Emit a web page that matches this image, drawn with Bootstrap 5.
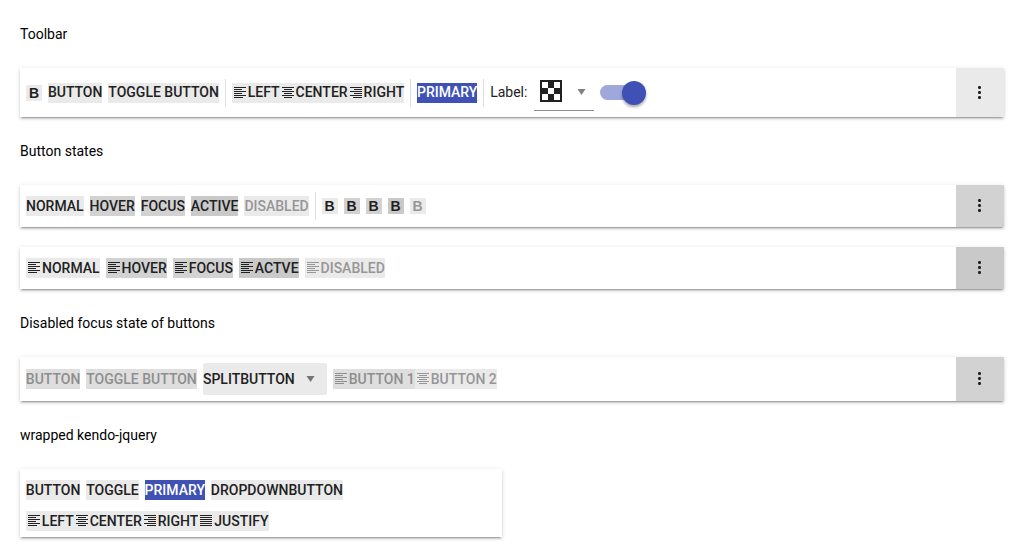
<!DOCTYPE html>
<html lang="en">
<head>
<meta charset="utf-8">
<title>Toolbar</title>
<meta name="viewport" content="width=device-width, initial-scale=1">
<link href="https://cdn.jsdelivr.net/npm/bootstrap@5.3.0/dist/css/bootstrap.min.css" rel="stylesheet">
<style>
body { font-family: Roboto, "Liberation Sans", sans-serif; font-size: 14px; line-height: 20px; color: #000; background: #fff; }
.page-body { padding: 24px 20px 20px; }
.caption-line { margin: 0; height: 20px; }
.toolbar { background: #fff; color: #212121; gap: 5.98px; padding-left: 6px; box-shadow: 0 3px 1px -2px rgba(0,0,0,.2), 0 2px 2px 0 rgba(0,0,0,.14), 0 1px 5px 0 rgba(0,0,0,.12); }
.tool { --bs-btn-padding-x: 0; --bs-btn-padding-y: 0; --bs-btn-font-size: 14px; --bs-btn-line-height: 20px; --bs-btn-font-weight: 500; --bs-btn-border-width: 0; --bs-btn-border-radius: 0; --bs-btn-color: #212121; --bs-btn-bg: #eaeaea; --bs-btn-disabled-opacity: 1; --bs-btn-disabled-bg: var(--bs-btn-bg); --bs-btn-disabled-color: #969696; height: 20px; white-space: nowrap; display: inline-flex; align-items: flex-start; flex: none; transition: none; }
.tool.tone-hover { --bs-btn-bg: #d2d2d2; }
.tool.tone-active { --bs-btn-bg: #c9c9c9; }
.tool.tone-dim { --bs-btn-bg: #dedede; --bs-btn-disabled-color: #8e8e8e; }
.tool.tone-primary { --bs-btn-bg: #3f51b5; --bs-btn-color: #fff; }
.tall-bar { gap: 5.9px; }
.snug-bar { column-gap: 5.83px; padding-left: 5.85px; }
.tall-bar .tool { --bs-btn-line-height: 19px; }
.tall-bar .tool-label { padding-bottom: 1px; }
.toolbar .tool.glyph-b { width: 16px; height: 16px; line-height: 16px; justify-content: center; font-family: "Liberation Sans", sans-serif; font-weight: 700; }
.tool svg { width: 16px; height: 16px; flex: none; margin-top: 2px; }
.divider { width: 1px; height: 28px; background: #dedede; flex: none; }
.overflow { width: 48px; border: 0; border-radius: 0; padding: 0; background: #d2d2d2; }
.color-tool { width: 60px; height: 36px; border-bottom: 1px solid #909090; margin-left: .9px; }
.color-tool .checker { margin: 0 0 2px 6px; }
.color-tool .arrow { margin-left: 15px; }
.switch-track { width: 40px; height: 15px; border-radius: 8px; background: #9fa8da; }
.switch-thumb { width: 24px; height: 24px; margin-right: -6px; border-radius: 50%; background: #3f51b5; box-shadow: 0 2px 3px rgba(0,0,0,.35); flex: none; }
.split-tool { height: 32px; width: 124px; background: #eaeaea; border-radius: 2px; font-weight: 500; margin-left: .3px; }
</style>
<script src="https://cdn.jsdelivr.net/npm/bootstrap@5.3.0/dist/js/bootstrap.bundle.min.js"></script>
</head>
<body>
<svg width="0" height="0" class="d-none">
  <symbol id="al" viewBox="0 0 16 16"><path d="M2 2.5h12M2 4.5h8M2 6.5h12M2 8.5h8M2 10.5h12M2 12.5h9" stroke="currentColor"/></symbol>
  <symbol id="ac" viewBox="0 0 16 16"><path d="M2 2.5h12M4 4.5h8M2 6.5h12M4 8.5h8M2 10.5h12M4 12.5h8" stroke="currentColor"/></symbol>
  <symbol id="ar" viewBox="0 0 16 16"><path d="M2 2.5h12M6 4.5h8M2 6.5h12M6 8.5h8M2 10.5h12M5 12.5h9" stroke="currentColor"/></symbol>
  <symbol id="aj" viewBox="0 0 16 16"><path d="M2 2.5h12M2 4.5h12M2 6.5h12M2 8.5h12M2 10.5h12M2 12.5h12" stroke="currentColor"/></symbol>
  <symbol id="dots" viewBox="0 0 16 16"><path d="M6 1h3v3H6zM6 6h3v3H6zM6 11h3v3H6z" fill="#212121" fill-opacity=".65"/><path d="M7 1h1v3H7zM7 6h1v3H7zM7 11h1v3H7zM6 2h3v1H6zM6 7h3v1H6zM6 12h3v1H6z" fill="#212121"/></symbol>
</svg>
<main class="page-body">
  <p class="caption-line">Toolbar</p>
  <div class="toolbar tall-bar d-flex align-items-center" style="height:49px;margin-top:24px">
    <button class="btn tool glyph-b">B</button>
    <button class="btn tool">BUTTON</button>
    <button class="btn tool">TOGGLE BUTTON</button>
    <span class="divider"></span>
    <div class="d-flex"><button class="btn tool"><svg><use href="#al"/></svg>LEFT</button><button class="btn tool"><svg><use href="#ac"/></svg>CENTER</button><button class="btn tool"><svg><use href="#ar"/></svg>RIGHT</button></div>
    <span class="divider"></span>
    <button class="btn tool tone-primary">PRIMARY</button>
    <span class="divider"></span>
    <span class="tool-label">Label:</span>
    <div class="color-tool d-flex align-items-center">
      <svg class="checker" width="22" height="22" viewBox="0 0 22 22"><path fill="#212121" d="M0 0h22v22H0z"/><path fill="#fff" d="M2 2h6v6H2zM14 2h6v6h-6zM8 8h6v6H8zM2 14h6v6H2zM14 14h6v6h-6z"/></svg>
      <svg class="arrow" width="9" height="6" viewBox="0 0 9 6"><path fill="#808080" d="M.5 0h8l-4 6z"/></svg>
    </div>
    <div class="switch-track d-flex align-items-center justify-content-end"><span class="switch-thumb"></span></div>
    <button class="overflow d-flex align-items-center justify-content-center ms-auto align-self-stretch" style="background:#eaeaea"><svg width="16" height="16"><use href="#dots"/></svg></button>
  </div>
  <p class="caption-line" style="margin-top:24px">Button states</p>
  <div class="toolbar d-flex align-items-center" style="height:42px;margin-top:24px">
    <button class="btn tool">NORMAL</button>
    <button class="btn tool tone-hover">HOVER</button>
    <button class="btn tool tone-hover">FOCUS</button>
    <button class="btn tool tone-active">ACTIVE</button>
    <button class="btn tool" disabled>DISABLED</button>
    <span class="divider"></span>
    <button class="btn tool glyph-b">B</button>
    <button class="btn tool glyph-b tone-hover">B</button>
    <button class="btn tool glyph-b tone-hover">B</button>
    <button class="btn tool glyph-b tone-active">B</button>
    <button class="btn tool glyph-b" disabled>B</button>
    <button class="overflow d-flex align-items-center justify-content-center ms-auto align-self-stretch"><svg width="16" height="16"><use href="#dots"/></svg></button>
  </div>
  <div class="toolbar d-flex align-items-center" style="height:42px;margin-top:20px">
    <button class="btn tool"><svg><use href="#al"/></svg>NORMAL</button>
    <button class="btn tool tone-hover"><svg><use href="#al"/></svg>HOVER</button>
    <button class="btn tool tone-hover"><svg><use href="#al"/></svg>FOCUS</button>
    <button class="btn tool tone-active"><svg><use href="#al"/></svg>ACTVE</button>
    <button class="btn tool" disabled><svg><use href="#al"/></svg>DISABLED</button>
    <button class="overflow d-flex align-items-center justify-content-center ms-auto align-self-stretch" style="background:#c9c9c9"><svg width="16" height="16"><use href="#dots"/></svg></button>
  </div>
  <p class="caption-line" style="margin-top:24px">Disabled focus state of buttons</p>
  <div class="toolbar snug-bar d-flex align-items-center" style="height:44px;margin-top:24px">
    <button class="btn tool tone-dim" disabled>BUTTON</button>
    <button class="btn tool tone-dim" disabled>TOGGLE BUTTON</button>
    <div class="split-tool d-flex align-items-center">SPLITBUTTON<svg class="ms-auto" style="margin-right:12px" width="9" height="6" viewBox="0 0 9 6"><path fill="#757575" d="M.5 0h8l-4 6z"/></svg></div>
    <div class="d-flex"><button class="btn tool tone-dim" disabled><svg><use href="#al"/></svg>BUTTON 1</button><button class="btn tool" disabled><svg><use href="#ac"/></svg>BUTTON 2</button></div>
    <button class="overflow d-flex align-items-center justify-content-center ms-auto align-self-stretch"><svg width="16" height="16"><use href="#dots"/></svg></button>
  </div>
  <p class="caption-line" style="margin-top:24px">wrapped kendo-jquery</p>
  <div class="toolbar snug-bar d-flex flex-wrap align-content-start" style="width:482px;height:68px;margin-top:24px;padding-top:11px;row-gap:11px">
    <button class="btn tool">BUTTON</button>
    <button class="btn tool">TOGGLE</button>
    <button class="btn tool tone-primary">PRIMARY</button>
    <button class="btn tool">DROPDOWNBUTTON</button>
    <div class="w-100 d-flex"><button class="btn tool"><svg><use href="#al"/></svg>LEFT</button><button class="btn tool"><svg><use href="#ac"/></svg>CENTER</button><button class="btn tool"><svg><use href="#ar"/></svg>RIGHT</button><button class="btn tool"><svg><use href="#aj"/></svg>JUSTIFY</button></div>
  </div>
</main>
</body>
</html>
